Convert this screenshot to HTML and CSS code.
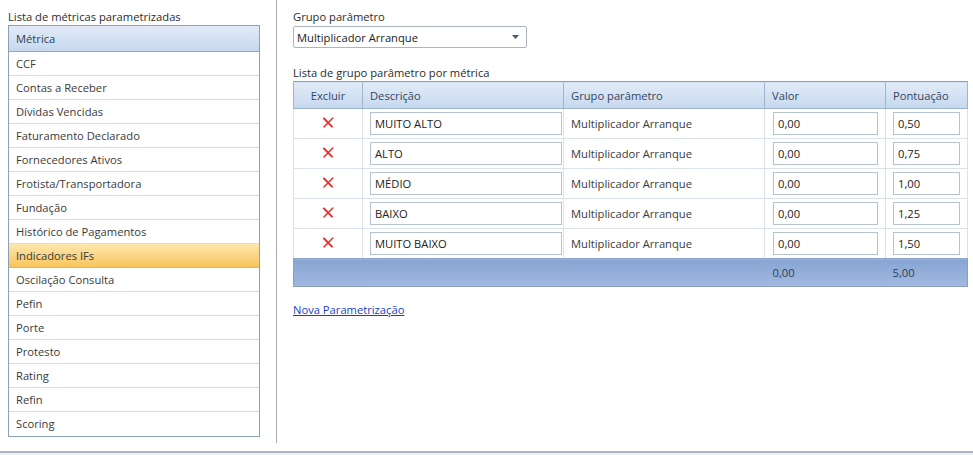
FILE: index.html
```html
<!DOCTYPE html>
<html lang="pt-BR">
<head>
<meta charset="utf-8">
<link rel="stylesheet" href="styles.css">
</head>
<body>
<div class="page">
  <aside class="side">
    <div class="caption">Lista de métricas parametrizadas</div>
    <div class="list">
      <div class="list-head">Métrica</div>
      <div class="item">CCF</div>
      <div class="item">Contas a Receber</div>
      <div class="item">Dívidas Vencidas</div>
      <div class="item">Faturamento Declarado</div>
      <div class="item">Fornecedores Ativos</div>
      <div class="item">Frotista/Transportadora</div>
      <div class="item">Fundação</div>
      <div class="item">Histórico de Pagamentos</div>
      <div class="item selected">Indicadores IFs</div>
      <div class="item">Oscilação Consulta</div>
      <div class="item">Pefin</div>
      <div class="item">Porte</div>
      <div class="item">Protesto</div>
      <div class="item">Rating</div>
      <div class="item">Refin</div>
      <div class="item last">Scoring</div>
    </div>
  </aside>
  <main class="content">
    <div class="caption">Grupo parâmetro</div>
    <div class="select">
      <span>Multiplicador Arranque</span>
      <svg class="arrow" width="7" height="4" viewBox="0 0 7 4"><path d="M0 0h7L3.5 4z" fill="#4f5866"/></svg>
    </div>
    <div class="caption caption-table">Lista de grupo parâmetro por métrica</div>
    <table class="grid">
      <thead>
        <tr>
          <th class="c-del">Excluir</th>
          <th class="c-desc">Descrição</th>
          <th class="c-grp">Grupo parâmetro</th>
          <th class="c-val">Valor</th>
          <th class="c-pts">Pontuação</th>
        </tr>
      </thead>
      <tbody>
        <tr>
          <td class="c-del"><svg class="x" width="12" height="11" viewBox="0 0 12 11"><path d="M2 1.5 L10 9.6" stroke="#e33131" stroke-width="2" stroke-linecap="round"/><path d="M10.8 1 L2 10" stroke="#e33131" stroke-width="1.5" stroke-linecap="round"/></svg></td>
          <td class="c-desc"><div class="inp w-desc">MUITO ALTO</div></td>
          <td class="c-grp">Multiplicador Arranque</td>
          <td class="c-val"><div class="inp w-val">0,00</div></td>
          <td class="c-pts"><div class="inp w-pts">0,50</div></td>
        </tr>
        <tr>
          <td class="c-del"><svg class="x" width="12" height="11" viewBox="0 0 12 11"><path d="M2 1.5 L10 9.6" stroke="#e33131" stroke-width="2" stroke-linecap="round"/><path d="M10.8 1 L2 10" stroke="#e33131" stroke-width="1.5" stroke-linecap="round"/></svg></td>
          <td class="c-desc"><div class="inp w-desc">ALTO</div></td>
          <td class="c-grp">Multiplicador Arranque</td>
          <td class="c-val"><div class="inp w-val">0,00</div></td>
          <td class="c-pts"><div class="inp w-pts">0,75</div></td>
        </tr>
        <tr>
          <td class="c-del"><svg class="x" width="12" height="11" viewBox="0 0 12 11"><path d="M2 1.5 L10 9.6" stroke="#e33131" stroke-width="2" stroke-linecap="round"/><path d="M10.8 1 L2 10" stroke="#e33131" stroke-width="1.5" stroke-linecap="round"/></svg></td>
          <td class="c-desc"><div class="inp w-desc">MÉDIO</div></td>
          <td class="c-grp">Multiplicador Arranque</td>
          <td class="c-val"><div class="inp w-val">0,00</div></td>
          <td class="c-pts"><div class="inp w-pts">1,00</div></td>
        </tr>
        <tr>
          <td class="c-del"><svg class="x" width="12" height="11" viewBox="0 0 12 11"><path d="M2 1.5 L10 9.6" stroke="#e33131" stroke-width="2" stroke-linecap="round"/><path d="M10.8 1 L2 10" stroke="#e33131" stroke-width="1.5" stroke-linecap="round"/></svg></td>
          <td class="c-desc"><div class="inp w-desc">BAIXO</div></td>
          <td class="c-grp">Multiplicador Arranque</td>
          <td class="c-val"><div class="inp w-val">0,00</div></td>
          <td class="c-pts"><div class="inp w-pts">1,25</div></td>
        </tr>
        <tr>
          <td class="c-del"><svg class="x" width="12" height="11" viewBox="0 0 12 11"><path d="M2 1.5 L10 9.6" stroke="#e33131" stroke-width="2" stroke-linecap="round"/><path d="M10.8 1 L2 10" stroke="#e33131" stroke-width="1.5" stroke-linecap="round"/></svg></td>
          <td class="c-desc"><div class="inp w-desc">MUITO BAIXO</div></td>
          <td class="c-grp">Multiplicador Arranque</td>
          <td class="c-val"><div class="inp w-val">0,00</div></td>
          <td class="c-pts"><div class="inp w-pts">1,50</div></td>
        </tr>
      </tbody>
      <tfoot>
        <tr>
          <td></td>
          <td></td>
          <td></td>
          <td class="c-val">0,00</td>
          <td class="c-pts">5,00</td>
        </tr>
      </tfoot>
    </table>
    <a class="link" href="#">Nova Parametrização</a>
  </main>
</div>
<div class="bottom"></div>
</body>
</html>
```

FILE: styles.css
```css
html, body {
  margin: 0;
  padding: 0;
  background: #ffffff;
}
body {
  font-family: "Open Sans", "Noto Sans", "DejaVu Sans", sans-serif;
  font-size: 11.2px;
  color: #333333;
  width: 973px;
  height: 455px;
  overflow: hidden;
}
.page {
  display: flex;
  height: 443px;
}
.side {
  padding: 8px 0 0 8px;
  border-right: 1px solid #a9a9a9;
  box-sizing: border-box;
  width: 277px;
}
.caption {
  line-height: 17px;
  height: 17px;
  color: #2b2b2b;
}
.list {
  width: 252px;
  box-sizing: border-box;
  border: 1px solid #8a9fba;
}
.list-head {
  height: 26px;
  line-height: 26px;
  padding-left: 7px;
  background: linear-gradient(#e2ebf7, #c6d8ef);
  border-bottom: 1px solid #8fa7c8;
  color: #2e3f55;
  box-sizing: border-box;
}
.item {
  height: 24px;
  line-height: 23px;
  padding-left: 7px;
  border-bottom: 1px solid #d5dde6;
  box-sizing: border-box;
  color: #3a3a3a;
}
.item.last {
  border-bottom: none;
  height: 24px;
}
.item.selected {
  background: linear-gradient(#fde8ae, #f8c45c);
  border-bottom-color: #e7b45a;
}
.content {
  flex: 1;
  padding: 8px 0 0 16px;
}
.select {
  margin-top: 1px;
  width: 234px;
  height: 22px;
  box-sizing: border-box;
  border: 1px solid #abb4c2;
  border-radius: 2px;
  display: flex;
  align-items: center;
  justify-content: space-between;
  padding: 0 7px 0 3px;
  color: #222222;
}
.arrow {
  display: block;
}
.caption-table {
  margin-top: 16px;
}
.grid {
  border-collapse: collapse;
  width: 674px;
  margin-top: 0;
  border: 1px solid #8a9fba;
  table-layout: fixed;
}
.grid th {
  height: 27px;
  padding: 0 0 0 7px;
  text-align: left;
  font-weight: normal;
  color: #34465e;
  background: linear-gradient(#e2ebf7, #c6d8ef);
  border: 1px solid #9fb4cf;
  border-top: none;
  box-sizing: border-box;
}
.grid th.c-del {
  text-align: center;
  padding: 0;
}
.c-del { width: 69px; }
.c-desc { width: 201px; }
.c-grp { width: 201px; }
.c-val { width: 121px; }
.c-pts { width: 82px; }
.grid tbody td {
  height: 30px;
  padding: 0 0 0 7px;
  border: 1px solid #dbe2ea;
  box-sizing: border-box;
  color: #3a3a3a;
}
.grid tbody tr:last-child td {
  border-bottom: 1px solid #8fa7c8;
}
.grid tbody td.c-del {
  padding: 0;
  text-align: center;
}
.grid tbody td.c-val {
  padding-left: 8px;
}
.x {
  display: inline-block;
  vertical-align: middle;
  margin-top: -5px;
}
.inp {
  height: 23px;
  line-height: 21px;
  box-sizing: border-box;
  border: 1px solid #b7c2cf;
  padding-left: 4px;
  color: #222222;
}
.w-desc { width: 192px; }
.w-val { width: 105px; }
.w-pts { width: 67px; }
.grid tfoot td {
  height: 27px;
  padding: 0 0 0 7px;
  background: linear-gradient(#87a4d3, #a1b9df);
  color: #2d3e57;
  border: none;
}
.grid tfoot td.c-val {
  padding-left: 8px;
}
.link {
  display: inline-block;
  margin-top: 15px;
  color: #1a3fc0;
  text-decoration: underline;
}
.bottom {
  margin-top: 8px;
  height: 4px;
  border-top: 2px solid #aab5c0;
  background: #eef0f2;
}
```
